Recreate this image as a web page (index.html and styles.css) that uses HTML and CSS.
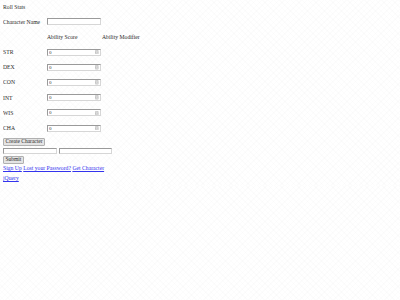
FILE: index.html
```html
<!DOCTYPE html>
<html lang="en">
<head>
    <meta charset="UTF-8">
    <title>Roll Stats</title>
    <link rel="stylesheet" href="styles.css">
</head>
<body>
    <form id="stats-form">
        <div class="title">Roll Stats</div>
        <table class="stats">
            <tr>
                <td class="label">Character Name</td>
                <td><input type="text" id="charName" name="charName"></td>
                <td></td>
            </tr>
            <tr>
                <td></td>
                <td>Ability Score</td>
                <td>Ability Modifier</td>
            </tr>
            <tr>
                <td class="label">STR</td>
                <td><span class="num"><input type="number" id="str" name="str" value="0"><svg class="spin" viewBox="0 0 4 5"><path d="M0.5 0.5h3v4h-3zM0.5 2.5h3M1.2 1.9l0.8-0.8 0.8 0.8M1.2 3.1l0.8 0.8 0.8-0.8"/></svg></span></td>
                <td class="mod" id="strMod"></td>
            </tr>
            <tr>
                <td class="label">DEX</td>
                <td><span class="num"><input type="number" id="dex" name="dex" value="0"><svg class="spin" viewBox="0 0 4 5"><path d="M0.5 0.5h3v4h-3zM0.5 2.5h3M1.2 1.9l0.8-0.8 0.8 0.8M1.2 3.1l0.8 0.8 0.8-0.8"/></svg></span></td>
                <td class="mod" id="dexMod"></td>
            </tr>
            <tr>
                <td class="label">CON</td>
                <td><span class="num"><input type="number" id="con" name="con" value="0"><svg class="spin" viewBox="0 0 4 5"><path d="M0.5 0.5h3v4h-3zM0.5 2.5h3M1.2 1.9l0.8-0.8 0.8 0.8M1.2 3.1l0.8 0.8 0.8-0.8"/></svg></span></td>
                <td class="mod" id="conMod"></td>
            </tr>
            <tr>
                <td class="label">INT</td>
                <td><span class="num"><input type="number" id="int" name="int" value="0"><svg class="spin" viewBox="0 0 4 5"><path d="M0.5 0.5h3v4h-3zM0.5 2.5h3M1.2 1.9l0.8-0.8 0.8 0.8M1.2 3.1l0.8 0.8 0.8-0.8"/></svg></span></td>
                <td class="mod" id="intMod"></td>
            </tr>
            <tr>
                <td class="label">WIS</td>
                <td><span class="num"><input type="number" id="wis" name="wis" value="0"><svg class="spin" viewBox="0 0 4 5"><path d="M0.5 0.5h3v4h-3zM0.5 2.5h3M1.2 1.9l0.8-0.8 0.8 0.8M1.2 3.1l0.8 0.8 0.8-0.8"/></svg></span></td>
                <td class="mod" id="wisMod"></td>
            </tr>
            <tr>
                <td class="label">CHA</td>
                <td><span class="num"><input type="number" id="cha" name="cha" value="0"><svg class="spin" viewBox="0 0 4 5"><path d="M0.5 0.5h3v4h-3zM0.5 2.5h3M1.2 1.9l0.8-0.8 0.8 0.8M1.2 3.1l0.8 0.8 0.8-0.8"/></svg></span></td>
                <td class="mod" id="chaMod"></td>
            </tr>
        </table>
        <button type="button" class="btn create">Create Character</button>
    </form>

    <form id="login-form" class="login">
        <div class="login-fields">
            <input type="text" name="username">
            <input type="password" name="password">
        </div>
        <input type="submit" class="btn" value="Submit">
    </form>

    <div class="links">
        <a href="#">Sign Up</a> <a href="#">Lost your Password?</a> <a href="#">Get Character</a>
    </div>
    <div class="lib">
        <a href="#">jQuery</a>
    </div>
</body>
</html>
```

FILE: styles.css
```css
body {
    font-family: "Liberation Serif", "Times New Roman", serif;
    font-size: 5.7px;
    color: #2a2a2a;
    margin: 3px;
    background-color: #ffffff;
    background-image:
        repeating-linear-gradient(45deg, rgba(0, 0, 0, 0.012) 0 1px, transparent 1px 4px),
        repeating-linear-gradient(-45deg, rgba(0, 0, 0, 0.012) 0 1px, transparent 1px 4px);
}
form {
    margin: 0;
}
.title {
    line-height: 8px;
}
.stats {
    border-collapse: collapse;
    margin-top: 3px;
}
.stats td {
    height: 15.2px;
    padding: 0;
    vertical-align: middle;
    white-space: nowrap;
}
.stats td.label {
    width: 44px;
}
.stats td:nth-child(2) {
    width: 55px;
}
input[type="text"], input[type="password"], input[type="number"] {
    box-sizing: border-box;
    width: 53.5px;
    height: 7px;
    margin: 0;
    padding: 0 1px;
    font-family: "Liberation Serif", serif;
    font-size: 5px;
    color: #333;
    background: #fff;
    border: 1px solid;
    border-color: #9a9a9a #d6d6d6 #d6d6d6 #9a9a9a;
    border-radius: 0;
    outline: none;
    vertical-align: middle;
}
input[type="number"] {
    -moz-appearance: textfield;
}
input[type="number"]::-webkit-inner-spin-button,
input[type="number"]::-webkit-outer-spin-button {
    -webkit-appearance: none;
    margin: 0;
}
.num {
    position: relative;
    display: inline-block;
    vertical-align: middle;
    line-height: 0;
}
.spin {
    position: absolute;
    right: 2px;
    top: 1.2px;
    width: 3.6px;
    height: 4.6px;
    fill: none;
    stroke: #9a9a9a;
    stroke-width: 0.5;
}
.btn {
    box-sizing: border-box;
    height: 7.5px;
    margin: 0;
    padding: 0 1.5px;
    font-family: "Liberation Serif", serif;
    font-size: 5.5px;
    line-height: 5px;
    color: #2a2a2a;
    background: #e4e4e4;
    border: 1px solid #b0b0b0;
    border-radius: 1px;
}
.create {
    margin-top: 2.5px;
}
.login {
    margin-top: 2.5px;
}
.login-fields {
    display: flex;
    gap: 2px;
    height: 6px;
}
.login-fields input {
    height: 6px;
}
.login .btn {
    margin-top: 2px;
}
.links {
    line-height: 8px;
    margin-top: 0.5px;
}
.lib {
    line-height: 8px;
    margin-top: 2px;
}
a {
    color: #3333ee;
}
```
